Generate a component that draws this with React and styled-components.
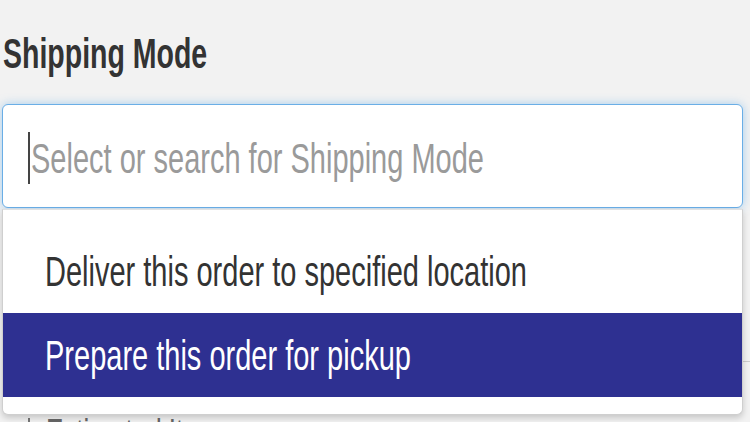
import React from 'react';
import styled, {createGlobalStyle} from 'styled-components';

const GlobalStyle = createGlobalStyle`
  html, body {
    margin: 0;
    padding: 0;
    background: #f2f2f2;
    font-family: "Liberation Sans", Arial, sans-serif;
    overflow: hidden;
  }
`;

// the screenshot is stretched vertically, so every text run gets the same scale
const Stretch = styled.span`
  display: inline-block;
  line-height: 1;
  transform: scaleY(1.48);
  transform-origin: center;
  white-space: nowrap;
`;

const Page = styled.div`
  width: 750px;
  height: 422px;
  padding-left: 2px;
  box-sizing: border-box;
  overflow: hidden;
`;

const Label = styled.div`
  height: 104px;
  display: flex;
  align-items: center;
  padding-left: 1px;
  padding-top: 2px;
  box-sizing: border-box;
  font-size: 28.5px;
  font-weight: 700;
  color: #333;
`;

const Field = styled.div`
  position: relative;
  width: 741px;
`;

const Control = styled.div`
  height: 104px;
  box-sizing: border-box;
  border: 1px solid #6aaee6;
  border-radius: 6px;
  background: #fff;
  box-shadow: 0 0 10px rgba(102, 175, 233, 0.55);
  display: flex;
  align-items: center;
  padding: 4px 0 0 25px;
`;

const Caret = styled.span`
  width: 2px;
  height: 52px;
  background: #444;
  margin-right: 1px;
`;

const Placeholder = styled.span`
  font-size: 29px;
  color: #9a9a9a;
`;

const Menu = styled.div`
  position: absolute;
  top: calc(100% + 1px);
  left: 0;
  right: 0;
  box-sizing: border-box;
  height: 206px;
  padding: 19px 0 17px;
  background: #fff;
  border: 1px solid #cfcfcf;
  border-top-color: #e2e2e2;
  border-radius: 0 0 6px 6px;
  box-shadow: 0 3px 6px rgba(0, 0, 0, 0.18);
  z-index: 2;
`;

const Option = styled.div`
  height: 84px;
  display: flex;
  align-items: center;
  padding-left: 42px;
  font-size: 29px;
  color: ${p => (p.$active ? '#fff' : '#333')};
  background: ${p => (p.$active ? '#2e3091' : 'transparent')};
`;

const Below = styled.div`
  margin-top: 153px;
  border-top: 1px solid #cdcdcd;
  padding: 56px 0 0 26px;
  display: flex;
  align-items: center;
  gap: 16px;
  color: #666;
  font-size: 26px;
`;

const Bar = styled.span`
  width: 2px;
  height: 30px;
  background: #777;
`;

export default function App() {
  return (
    <Page>
      <GlobalStyle />
      <Label>
        <Stretch>Shipping Mode</Stretch>
      </Label>
      <Field>
        <Control>
          <Caret />
          <Placeholder>
            <Stretch>Select or search for Shipping Mode</Stretch>
          </Placeholder>
        </Control>
        <Menu>
          <Option>
            <Stretch>Deliver this order to specified location</Stretch>
          </Option>
          <Option $active>
            <Stretch>Prepare this order for pickup</Stretch>
          </Option>
        </Menu>
      </Field>
      <Below>
        <Bar />
        <Stretch>Estimated Items</Stretch>
      </Below>
    </Page>
  );
}
